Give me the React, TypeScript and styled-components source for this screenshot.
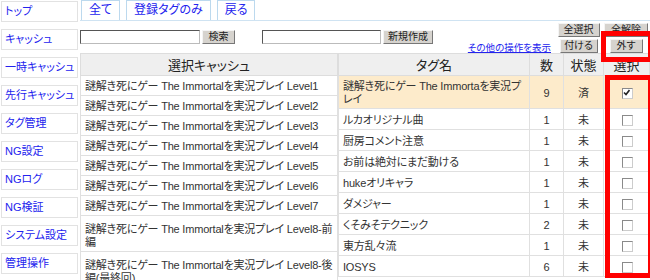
import React from "react";
import styled, { createGlobalStyle } from "styled-components";

const Global = createGlobalStyle`
  body {
    margin: 0;
    background: #fff;
    font-family: "Liberation Sans", "Noto Sans CJK JP", sans-serif;
    font-feature-settings: "palt";
    font-size: 11px;
    color: #333;
  }
`

const Page = styled.div`
  position: relative;
  width: 650px;
  height: 280px;
  overflow: hidden;
  display: flex;
  gap: 2px;
`

const Side = styled.nav`
  width: 77px;
  padding: 1px 0 0 1px;
  display: flex;
  flex-direction: column;
  gap: 7px;
  flex-shrink: 0;
`

const SideLink = styled.a`
  display: block;
  box-sizing: border-box;
  height: 21px;
  border: 1px solid #e2e2e2;
  padding-left: 3px;
  line-height: 19px;
  font-size: 11px;
  color: #2323ee;
  text-decoration: none;
  white-space: nowrap;
  overflow: hidden;
`

const Main = styled.div`
  flex: 1;
  display: flex;
  flex-direction: column;
`

const Tabs = styled.div`
  display: flex;
  gap: 6px;
  height: 20px;
  padding-left: 1px;
  border-bottom: 1px solid #cfe3f2;
`

const Tab = styled.a`
  box-sizing: border-box;
  height: 20px;
  padding: 0 7px;
  border: 1px solid #bcd9ee;
  border-bottom: none;
  line-height: 19px;
  font-size: 12px;
  color: #2323ee;
  text-decoration: none;
`

const Toolbar = styled.div`
  display: flex;
  align-items: flex-start;
  height: 34px;
`

const SearchGroup = styled.div`
  display: flex;
  align-items: center;
  margin-top: 9px;
  gap: 2px;
`

const TextBox = styled.input<{ $w: number; $ml?: number }>`
  box-sizing: border-box;
  width: ${p => p.$w}px;
  height: 14px;
  margin: 0 0 0 ${p => p.$ml ?? 0}px;
  padding: 0 2px;
  border: 1px solid #bbb;
  border-top-color: #555;
  border-left-color: #555;
  font-size: 11px;
`

const Btn = styled.button<{ $w: number }>`
  box-sizing: border-box;
  width: ${p => p.$w}px;
  height: 14px;
  padding: 0;
  background: #d6d3ce;
  border: 1px solid;
  border-color: #f4f4f4 #777 #777 #f4f4f4;
  font-family: inherit;
  font-feature-settings: "palt";
  font-size: 10px;
  line-height: 12px;
  color: #222;
  overflow: hidden;
`

const Actions = styled.div`
  margin-left: auto;
  margin-top: 2px;
  display: grid;
  grid-template-columns: auto 47px 48px;
  grid-template-rows: 14px 14px;
  row-gap: 2px;
  align-items: center;
  justify-items: center;
`

const MoreLink = styled.a`
  grid-column: 1;
  grid-row: 2;
  margin: 2px 4px 0 0;
  font-size: 9.5px;
  color: #2323ee;
  text-decoration: underline;
`

const Tables = styled.div`
  display: flex;
  align-items: flex-start;
`

const Table = styled.table<{ $w: number }>`
  width: ${p => p.$w}px;
  border-collapse: collapse;
  table-layout: fixed;
`

const Th = styled.th<{ $w?: number }>`
  height: 22px;
  padding: 0;
  box-sizing: border-box;
  ${p => (p.$w ? `width: ${p.$w}px;` : "")}
  background: #efefef;
  border: 1px solid #dddddd;
  font-weight: normal;
  font-size: 13px;
  color: #222;
`

const Row = styled.tr<{ $hl?: boolean; $h: number }>`
  height: ${p => p.$h}px;
  background: ${p => (p.$hl ? "#fdebcb" : "#fff")};
`

const Td = styled.td<{ $center?: boolean; $tall?: boolean }>`
  padding: ${p => (p.$tall ? "7px 4px 2px" : "4px 4px 2px")};
  border: 1px solid #e0e0e0;
  line-height: 13px;
  font-size: 11px;
  letter-spacing: -0.2px;
  color: #333;
  text-align: ${p => (p.$center ? "center" : "left")};
  vertical-align: middle;
  word-break: break-all;
`

const Check = styled.span`
  display: inline-block;
  position: relative;
  width: 9px;
  height: 9px;
  margin-left: 2px;
  border: 1px solid #8a8a8a;
  border-right-color: #ccc;
  border-bottom-color: #ccc;
  background: #fff;
  vertical-align: middle;
  svg {
    position: absolute;
    left: 0;
    top: 0;
  }
`

const Mark = styled.div<{ $x: number; $y: number; $w: number; $h: number }>`
  position: absolute;
  left: ${p => p.$x}px;
  top: ${p => p.$y}px;
  width: ${p => p.$w}px;
  height: ${p => p.$h}px;
  box-sizing: border-box;
  border: 5px solid #ff0000;
  pointer-events: none;
`

const menu = ["トップ", "キャッシュ", "一時キャッシュ", "先行キャッシュ", "タグ管理", "NG設定", "NGログ", "NG検証", "システム設定", "管理操作"]

const base = "謎解き死にゲー The Immortalを実況プレイ "
const caches = ["Level1", "Level2", "Level3", "Level4", "Level5", "Level6", "Level7", "Level8-前編", "Level8-後編(最終回)"]

const tags: { name: string; count: number; done: boolean }[] = [
  { name: "謎解き死にゲー The Immortaを実況プレイ", count: 9, done: true },
  { name: "ルカオリジナル曲", count: 1, done: false },
  { name: "厨房コメント注意", count: 1, done: false },
  { name: "お前は絶対にまだ動ける", count: 1, done: false },
  { name: "hukeオリキャラ", count: 1, done: false },
  { name: "ダメジャー", count: 1, done: false },
  { name: "くそみそテクニック", count: 2, done: false },
  { name: "東方乱々流", count: 1, done: false },
  { name: "IOSYS", count: 6, done: false },
]

function App() {
  return (
    <Page>
      <Global />
      <Side>
        {menu.map(m => <SideLink key={m} href="#">{m}</SideLink>)}
      </Side>
      <Main>
        <Tabs>
          <Tab href="#">全て</Tab>
          <Tab href="#">登録タグのみ</Tab>
          <Tab href="#">戻る</Tab>
        </Tabs>
        <Toolbar>
          <SearchGroup>
            <TextBox $w={120} />
            <Btn $w={33}>検索</Btn>
            <TextBox $w={119} $ml={25} />
            <Btn $w={50}>新規作成</Btn>
          </SearchGroup>
          <Actions>
            <Btn $w={42} style={{ gridColumn: 2, gridRow: 1 }}>全選択</Btn>
            <Btn $w={44} style={{ gridColumn: 3, gridRow: 1 }}>全解除</Btn>
            <MoreLink href="#">その他の操作を表示</MoreLink>
            <Btn $w={38} style={{ gridColumn: 2, gridRow: 2 }}>付ける</Btn>
            <Btn $w={33} style={{ gridColumn: 3, gridRow: 2 }}>外す</Btn>
          </Actions>
        </Toolbar>
        <Tables>
          <Table $w={258}>
            <thead>
              <tr><Th>選択キャッシュ</Th></tr>
            </thead>
            <tbody>
              {caches.map(c => (
                <Row key={c} $h={20}>
                  <Td $tall={c.includes("編")}>{base + c}</Td>
                </Row>
              ))}
            </tbody>
          </Table>
          <Table $w={312}>
            <thead>
              <tr>
                <Th>タグ名</Th>
                <Th $w={34}>数</Th>
                <Th $w={40}>状態</Th>
                <Th $w={46}>選択</Th>
              </tr>
            </thead>
            <tbody>
              {tags.map(t => (
                <Row key={t.name} $hl={t.done} $h={21}>
                  <Td>{t.name}</Td>
                  <Td $center>{t.count}</Td>
                  <Td $center>{t.done ? "済" : "未"}</Td>
                  <Td $center>
                    <Check>
                      {t.done && (
                        <svg width="7" height="7" viewBox="0 0 7 7">
                          <path d="M1 3.5 L3 5.5 L6.5 1" stroke="#222" strokeWidth="1.6" fill="none" />
                        </svg>
                      )}
                    </Check>
                  </Td>
                </Row>
              ))}
            </tbody>
          </Table>
        </Tables>
      </Main>
      <Mark $x={601} $y={31} $w={52} $h={31} />
      <Mark $x={605} $y={75} $w={48} $h={203} />
    </Page>
  );
}

export default App
